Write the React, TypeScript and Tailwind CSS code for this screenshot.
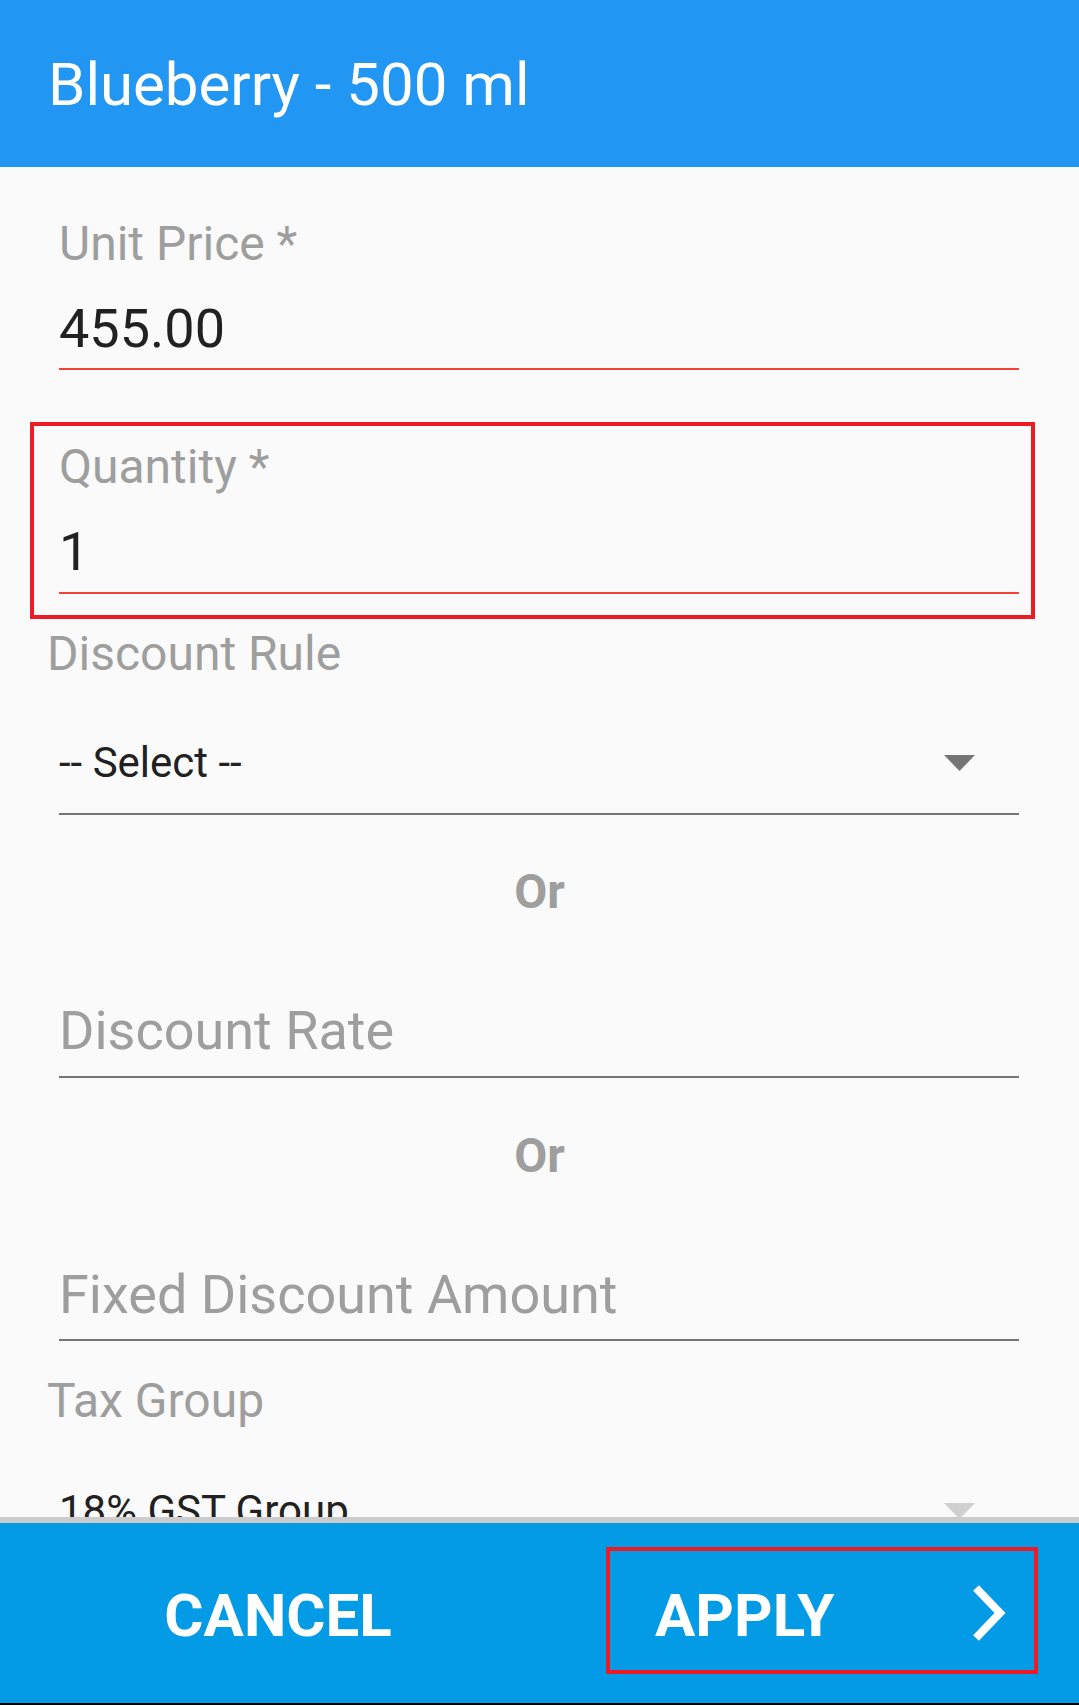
import React from "react";

function Underline({ color }: { color: string }) {
  return <div className={`h-[2px] ${color}`} />;
}

function Triangle({ color }: { color: string }) {
  return (
    <svg width="31" height="16" viewBox="0 0 31 16" className="mr-[44px] shrink-0">
      <polygon points="0,0 31,0 15.5,16" fill={color} />
    </svg>
  );
}

export default function App() {
  return (
    <div className="w-[1079px] h-[1705px] bg-black font-['Roboto',_'Liberation_Sans',_sans-serif] overflow-hidden flex flex-col">
      {/* Header */}
      <div className="h-[167px] shrink-0 bg-[#2196F3] flex items-center pl-[48px] pt-[3px]">
        <h1 className="text-[60px] leading-[70px] text-white font-normal">Blueberry - 500 ml</h1>
      </div>

      {/* Content */}
      <div className="h-[1350px] shrink-0 bg-[#FAFAFA] overflow-hidden flex flex-col">
        {/* Unit price */}
        <div className="pl-[59px] pr-[60px] mt-[49px]">
          <div className="text-[48px] leading-[56px] text-[#9E9E9E]">Unit Price *</div>
          <div className="mt-[26px] text-[54px] leading-[62px] text-[#212121]">455.00</div>
          <div className="mt-[8px]">
            <Underline color="bg-[#F44336]" />
          </div>
        </div>

        {/* Quantity (highlighted) */}
        <div className="ml-[30px] mr-[44px] mt-[52px] border-4 border-[#ED1C24] pl-[25px] pr-[12px] pt-[13px] pb-[21px]">
          <div className="text-[48px] leading-[56px] text-[#9E9E9E]">Quantity *</div>
          <div className="mt-[26px] text-[54px] leading-[62px] text-[#212121]">1</div>
          <div className="mt-[9px]">
            <Underline color="bg-[#F44336]" />
          </div>
        </div>

        {/* Discount rule */}
        <div className="pl-[47px] mt-[7px] text-[48px] leading-[56px] text-[#9E9E9E]">Discount Rule</div>
        <div className="pl-[59px] pr-[60px]">
          <div className="mt-[51px] h-[60px] flex items-center justify-between">
            <span className="text-[42px] leading-[60px] text-[#212121]">-- Select --</span>
            <Triangle color="#757575" />
          </div>
          <div className="mt-[20px]">
            <Underline color="bg-[#757575]" />
          </div>
        </div>

        <div className="mt-[49px] text-center text-[48px] leading-[56px] font-bold text-[#9E9E9E]">Or</div>

        {/* Discount rate */}
        <div className="pl-[59px] pr-[60px]">
          <div className="mt-[80px] text-[54px] leading-[62px] text-[#9E9E9E]">Discount Rate</div>
          <div className="mt-[14px]">
            <Underline color="bg-[#757575]" />
          </div>
        </div>

        <div className="mt-[50px] text-center text-[48px] leading-[56px] font-bold text-[#9E9E9E]">Or</div>

        {/* Fixed discount */}
        <div className="pl-[59px] pr-[60px]">
          <div className="mt-[80px] text-[54px] leading-[62px] text-[#9E9E9E]">Fixed Discount Amount</div>
          <div className="mt-[13px]">
            <Underline color="bg-[#757575]" />
          </div>
        </div>

        {/* Tax group */}
        <div className="pl-[47px] mt-[32px] text-[48px] leading-[56px] text-[#9E9E9E]">Tax Group</div>
        <div className="pl-[59px] pr-[60px]">
          <div className="mt-[52px] h-[60px] flex items-center justify-between">
            <span className="text-[42px] leading-[60px] text-[#212121]">18% GST Group</span>
            <Triangle color="#D0D0D0" />
          </div>
          <div className="mt-[20px]">
            <Underline color="bg-[#757575]" />
          </div>
        </div>
      </div>

      {/* Shadow divider */}
      <div className="h-[6px] shrink-0 bg-[#CCCCCC]" />

      {/* Bottom bar */}
      <div className="relative h-[180px] shrink-0 bg-[#039BE5] flex">
        <div className="w-[540px] h-full flex items-center justify-center pl-[16px] pt-[5px]">
          <span className="text-[60px] leading-[70px] font-bold text-white">CANCEL</span>
        </div>
        <div className="flex-1 h-full flex items-center pl-[115px] pt-[5px]">
          <span className="text-[60px] leading-[70px] font-bold text-white">APPLY</span>
          <svg width="40" height="62" viewBox="0 0 40 62" className="ml-auto mr-[70px] -mt-[5px]">
            <polyline points="7,6 31,31 7,56" fill="none" stroke="white" strokeWidth="8" strokeLinejoin="miter" />
          </svg>
        </div>
        <div className="absolute left-[606px] top-[24px] w-[432px] h-[127px] border-4 border-[#ED1C24]" />
      </div>

      <div className="h-[2px] shrink-0 bg-black" />
    </div>
  );
}
